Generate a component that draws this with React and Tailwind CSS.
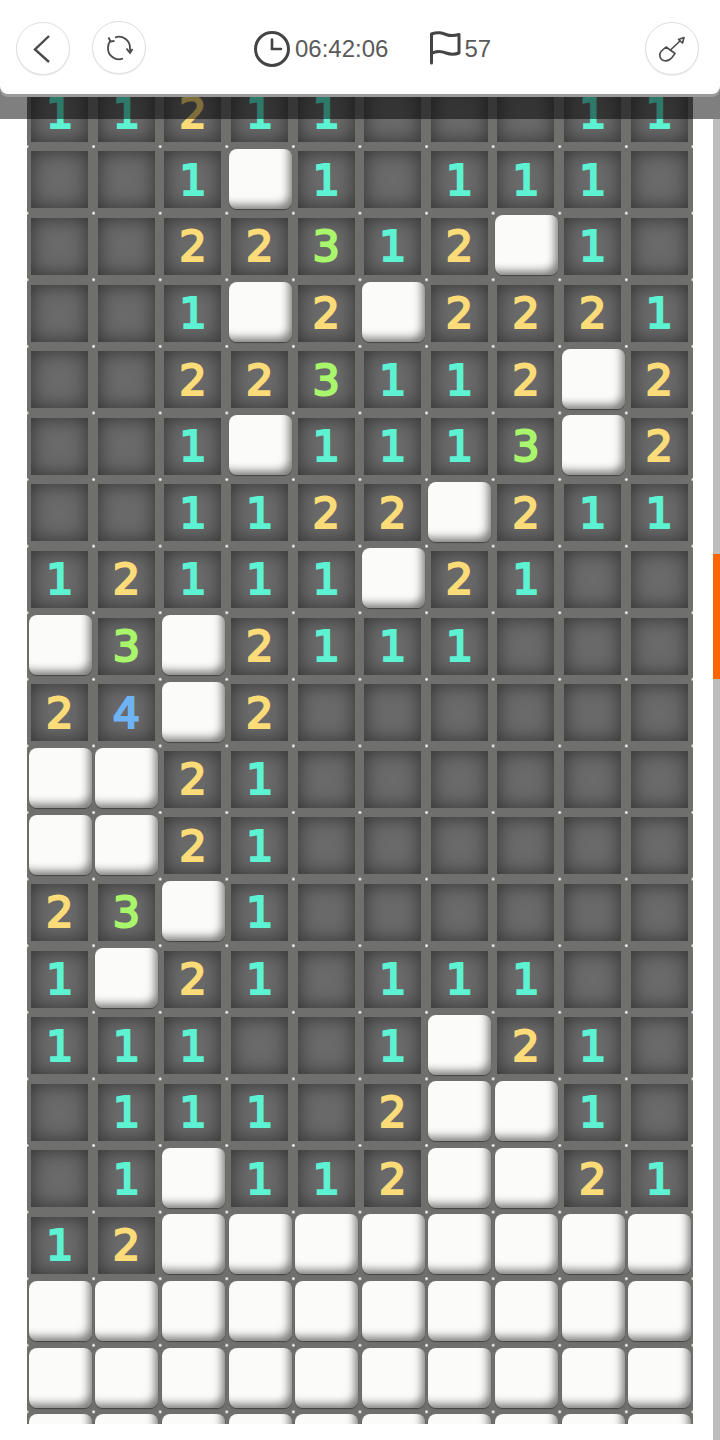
const B = "W";
const rows = [
  [1,1,2,1,1,0,0,0,1,1],
  [0,0,1,B,1,0,1,1,1,0],
  [0,0,2,2,3,1,2,B,1,0],
  [0,0,1,B,2,B,2,2,2,1],
  [0,0,2,2,3,1,1,2,B,2],
  [0,0,1,B,1,1,1,3,B,2],
  [0,0,1,1,2,2,B,2,1,1],
  [1,2,1,1,1,B,2,1,0,0],
  [B,3,B,2,1,1,1,0,0,0],
  [2,4,B,2,0,0,0,0,0,0],
  [B,B,2,1,0,0,0,0,0,0],
  [B,B,2,1,0,0,0,0,0,0],
  [2,3,B,1,0,0,0,0,0,0],
  [1,B,2,1,0,1,1,1,0,0],
  [1,1,1,0,0,1,B,2,1,0],
  [0,1,1,1,0,2,B,B,1,0],
  [0,1,B,1,1,2,B,B,2,1],
  [1,2,B,B,B,B,B,B,B,B],
  [B,B,B,B,B,B,B,B,B,B],
  [B,B,B,B,B,B,B,B,B,B],
  [B,B,B,B,B,B,B,B,B,B],
];
const colors = { 1: "text-[#5cf2d2]", 2: "text-[#fbdc78]", 3: "text-[#a9f56c]", 4: "text-[#6eb4f4]" };

function Cell({ v }) {
  if (v === B) {
    return (
      <div className="flex items-center justify-center">
        <div className="w-[63px] h-[60px] mt-[-2px] rounded-[8px] bg-[#fbfbfa] shadow-[inset_-6px_-7px_8px_-3px_rgba(0,0,0,0.5),0_1px_1px_rgba(0,0,0,0.4)]" />
      </div>
    );
  }
  return (
    <div className="flex items-center justify-center">
      <div className={`w-[57px] h-[57px] pt-[1px] flex items-center justify-center bg-[#6a6a6a] shadow-[inset_0_0_20px_rgba(0,0,0,0.55)] font-['DejaVu_Sans',sans-serif] font-normal text-[43px] leading-none [-webkit-text-stroke:2.2px_currentColor] mr-[1px] ${colors[v] || ""}`}>
        {v ? v : ""}
      </div>
    </div>
  );
}

function Round({ children, className = "" }) {
  return (
    <div className={`w-[54px] h-[53px] rounded-full bg-white border border-[#dedede] shadow-[0_1px_1px_rgba(0,0,0,0.08)] flex items-center justify-center ${className}`}>
      {children}
    </div>
  );
}

export default function App() {
  return (
    <div className="relative w-[720px] h-[1440px] bg-white overflow-hidden font-['Liberation_Sans',sans-serif]">
      <div className="pt-[80px] pl-[27px]">
        <div className="w-[666px] h-[1344px] overflow-hidden grid grid-cols-10 auto-rows-[66.6px] bg-[#6f6f6e] bg-[radial-gradient(circle,#ffffff_0,#ffffff_0.8px,transparent_1.8px)] bg-[length:66.6px_66.6px] bg-[position:33.3px_33.3px]">
          {rows.flat().map((v, i) => <Cell key={i} v={v} />)}
        </div>
      </div>

      <div className="absolute top-0 left-0 w-full h-[119px] bg-black/50 z-10" />

      <div className="absolute top-[119px] bottom-0 right-0 w-[7px] bg-[#bdbdbd] z-10 pt-[435px]">
        <div className="h-[125px] bg-[#fb6400]" />
      </div>

      <header className="absolute top-0 left-0 w-full h-[94px] z-20 bg-white rounded-b-[8px] shadow-[0_3px_0_#9b9b9b] flex items-center pl-4 pr-[21px] text-[24px] text-[#5a5a5a] pt-[3px]">
        <Round>
          <svg width="24" height="32" viewBox="0 0 24 32" fill="none" stroke="#4a4a4a" strokeWidth="2.4" className="mr-[4px]">
            <path d="M20 3 L6 16.5 L20 29" />
          </svg>
        </Round>
        <Round className="ml-[22px] mt-[-2px]">
          <svg width="28" height="28" viewBox="0 0 28 28" fill="none" stroke="#4a4a4a" strokeWidth="1.8">
            <path d="M5.5 6.5 A11 11 0 0 0 3 14 A11 11 0 0 0 18 24.5" />
            <path d="M10 3.5 A11 11 0 0 1 25 14 V17" />
            <path d="M3.5 3.5 L5.5 7.5 L9.5 7" />
            <path d="M21.5 14.5 L25 19 L27.5 15" />
          </svg>
        </Round>
        <svg width="36" height="36" viewBox="0 0 36 36" fill="none" stroke="#444" strokeWidth="3" className="ml-[108px]" strokeLinecap="round">
          <circle cx="18" cy="18" r="16.5" />
          <path d="M18 8.5 V18 H27" strokeWidth="2.6" />
        </svg>
        <span className="ml-[5px]">06:42:06</span>
        <svg width="32" height="34" viewBox="0 0 32 34" fill="none" stroke="#444" strokeWidth="3" className="ml-[41px] mt-[-1px]" strokeLinecap="round" strokeLinejoin="round">
          <path d="M2.5 32 V3 C 9 0.5 13 2 17 3.5 C 21 5 25 5 30 3.5 V22 C 25 24 21 23.5 17 22 C 12 20 7 20 2.5 22.5" />
        </svg>
        <span className="ml-[3px]">57</span>
        <Round className="ml-auto">
          <svg width="30" height="30" viewBox="0 0 30 30" fill="none" stroke="#4a4a4a" strokeWidth="1.6" strokeLinejoin="round">
            <path d="M9 13 L4 17.5 C 1.5 20.5 3 25.5 6.5 26.5 C 10 27.5 13 26 15 23.5 L18 19.5 Z" />
            <path d="M13.5 16 L23.5 6.5" />
            <path d="M21.5 5.5 L27 3.5 L25.5 9 Z" />
          </svg>
        </Round>
      </header>
    </div>
  );
}
